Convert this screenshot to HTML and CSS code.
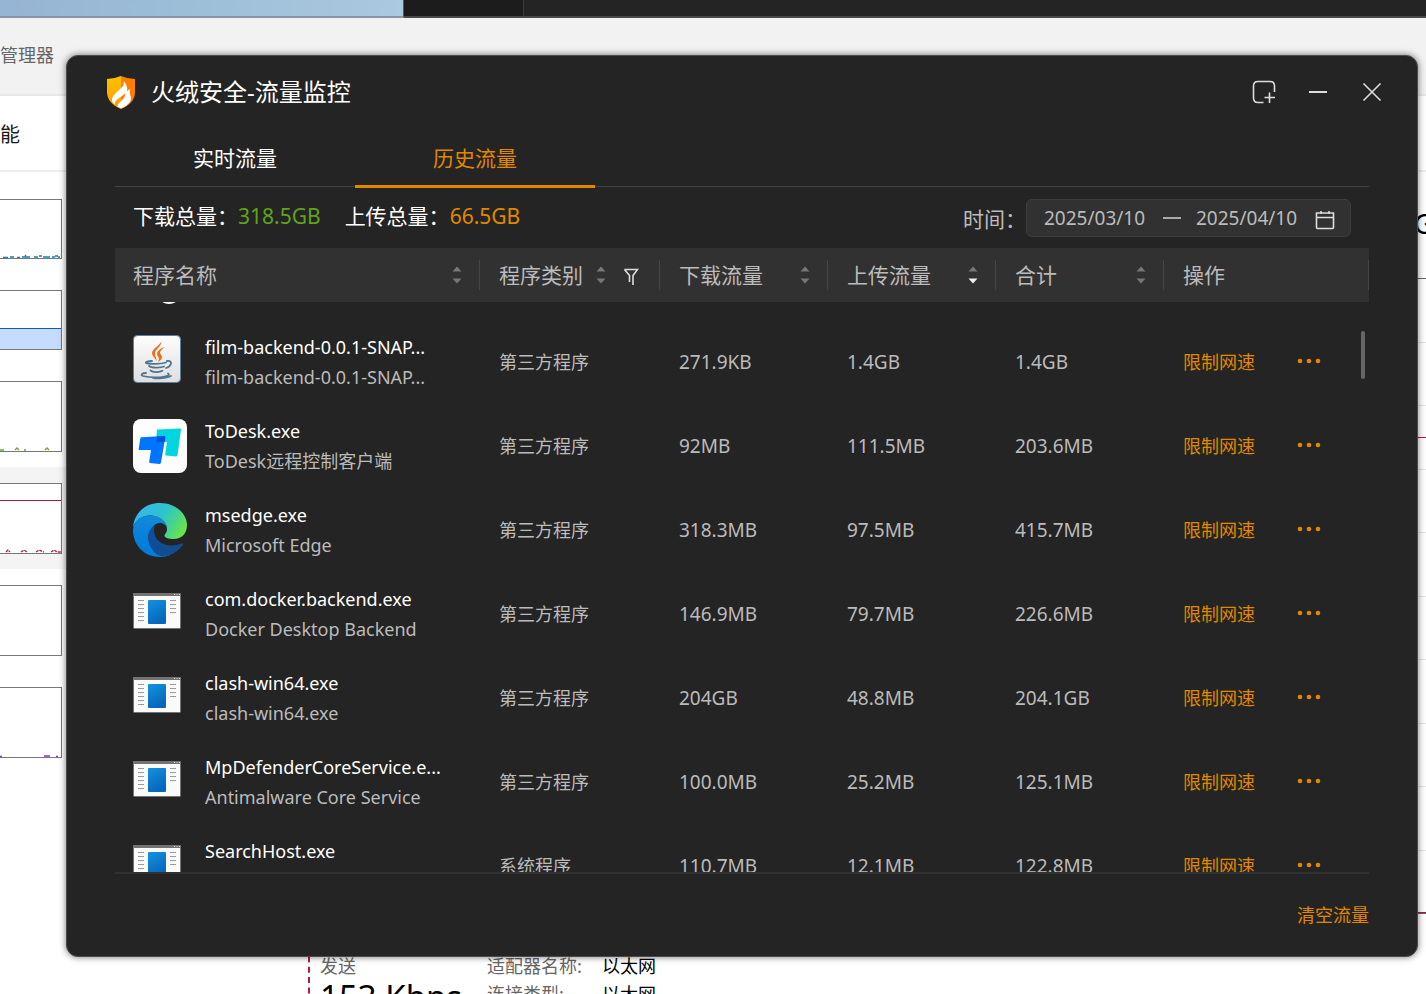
FILE: index.html
```html
<!DOCTYPE html>
<html lang="zh-CN">
<head>
<meta charset="utf-8">
<title>火绒安全-流量监控</title>
<link rel="stylesheet" href="styles.css">
</head>
<body>
<svg class="defs" aria-hidden="true">
  <defs>
    <linearGradient id="pane" x1="0" y1="0" x2="0.4" y2="1"><stop offset="0" stop-color="#1492e0"/><stop offset="1" stop-color="#0667bb"/></linearGradient>
    <linearGradient id="java-bg" x1="0" y1="0" x2="0" y2="1"><stop offset="0" stop-color="#fdfdfd"/><stop offset="1" stop-color="#dfdfe1"/></linearGradient>
    <linearGradient id="edge-top" x1="0" y1="0.2" x2="1" y2="0.6"><stop offset="0" stop-color="#36b5f4"/><stop offset="0.5" stop-color="#2dc2cf"/><stop offset="0.78" stop-color="#48d58a"/><stop offset="1" stop-color="#69e54b"/></linearGradient>
    <linearGradient id="edge-left" x1="0.5" y1="0" x2="0.3" y2="1"><stop offset="0" stop-color="#138ad8"/><stop offset="1" stop-color="#0079dc"/></linearGradient>
    <linearGradient id="edge-low" x1="0" y1="0" x2="1" y2="0.6"><stop offset="0" stop-color="#0c4f9a"/><stop offset="1" stop-color="#124c8c"/></linearGradient>
    <linearGradient id="shield-l" x1="0" y1="0" x2="0" y2="1"><stop offset="0" stop-color="#ffc400"/><stop offset="1" stop-color="#ff9a00"/></linearGradient>
    <symbol id="app" viewBox="0 0 48 36">
      <rect x="0.5" y="0.5" width="47" height="35" rx="1" fill="#fafafa" stroke="#75736f"/>
      <path d="M0 1q0-1 1-1h46q1 0 1 1v2H0z" fill="#75736f"/>
      <path d="M41 1.5h1M43.500 1.500h1M46 1.500h1" stroke="#ddd"/>
      <rect x="15" y="7" width="18" height="24" rx="1" fill="url(#pane)"/>
      <path d="M5 7.500h6M5 11.500h6M5 15.500h6M5 19.500h6M5 23.500h6M5 27.500h6M37 7.500h6M37 11.500h6M37 15.500h6M37 19.500h6" stroke="#999"/>
    </symbol>
    <symbol id="dots" viewBox="0 0 24 6">
      <circle cx="3" cy="3" r="2.300"/><circle cx="12" cy="3" r="2.300"/><circle cx="21" cy="3" r="2.300"/>
    </symbol>
    <symbol id="sort" viewBox="0 0 10 18">
      <path class="up" d="M5 0.500L9.500 5.500h-9z"/><path class="down" d="M5 17.500L9.500 12.500h-9z"/>
    </symbol>
  </defs>
</svg>

<div class="desktop">
  <div class="wallpaper"><div class="sky"></div><div class="dock"></div><div class="panel"></div></div>
  <section class="manager">
    <header class="manager-title">管理器</header>
    <div class="manager-tab">能</div>
    <div class="manager-body">
      <aside class="charts">
        <div class="chart-item"><div class="chart"><svg class="trace" viewBox="0 0 61 4"><path d="M3 3.500h5M10 3h4M17 3.500h3M22 3h8M25 2l1-1M34 3h4M39 2h3M43 3h7M52 3h3M55 2h3M58 3h2" stroke="#117dbb" stroke-width="1.400" fill="none"/></svg></div></div>
        <div class="chart-item"><div class="chart memory"><div class="fill"></div></div></div>
        <div class="chart-item"><div class="chart tall"><svg class="trace" viewBox="0 0 61 4"><path d="M0 3h4M15 3l2-2 2 2M24 3h2M45 3l2-2 2 2" stroke="#6fa23c" stroke-width="1.400" fill="none"/></svg></div></div>
        <div class="chart-item selected"><div class="chart tall network"><svg class="trace" viewBox="0 0 61 4"><path d="M6 3l2-2 2 2M21 3l3-2 3 2M36 3l3-2 5 2M51 3l3-2 3 2h4" stroke="#b5264f" stroke-width="1.400" stroke-dasharray="3 1" fill="none"/></svg></div></div>
        <div class="chart-item"><div class="chart tall"></div></div>
        <div class="chart-item"><div class="chart tall"><svg class="trace" viewBox="0 0 61 4"><path d="M0 3.500h2M44 3h6M56 3.500h2" stroke="#8f2be2" stroke-width="1.400" fill="none"/></svg></div></div>
      </aside>
      <main class="detail">
        <div class="adapter">G</div>
        <div class="graph"><i></i><i></i><i class="peak"></i><i></i><i></i><i></i><i></i><i></i><i></i><i class="last"></i></div>
        <div class="figures">
          <div class="send"><span>发送</span><strong>153 Kbps</strong></div>
          <dl class="facts"><dt>适配器名称:</dt><dd>以太网</dd><dt>连接类型:</dt><dd>以太网</dd></dl>
        </div>
      </main>
    </div>
  </section>

  <section class="window">
    <header class="titlebar">
      <svg class="logo" viewBox="0 0 28 33"><path d="M14 0Q7 3 0 3v13q0 11 14 17z" fill="url(#shield-l)"/><path d="M14 0q7 3 14 3v13q0 11-14 17z" fill="#ff7d00"/><path d="M16.500 5c1 4-1 6-5 9.500C7 18.500 5 21 5 24c0 2 1.500 3.700 3 4.500-.6-3.500 2.500-5.500 5.500-7.500 2-1.300 4-2.500 4.500-4 .5 4-2 6.500-5 9-1.500 1.500-2.500 3-2.500 4.500l3.500 2 4-2c3.500-2 6-5 6-8.500 0-2-1.500-3.500-1.200-6.500.2-1.200.2-1.800 0-2.500-1 .5-2 1.500-2.600 2.500C20.500 10.500 19 7 16.500 5z" fill="#fff"/></svg>
      <h1>火绒安全-流量监控</h1>
      <div class="controls">
        <button aria-label="小窗"><svg width="24" height="24" viewBox="0 0 24 24"><path d="M11.500 22.500H6q-4.500 0-4.500-4.500V6q0-4.500 4.500-4.500h12q4.500 0 4.500 4.500v6M12.500 17.500h10.500M17.500 12.500v10.500"/></svg></button>
        <button aria-label="最小化"><svg width="20" height="20" viewBox="0 0 20 20"><path d="M1 10h18" stroke-width="2"/></svg></button>
        <button aria-label="关闭"><svg width="20" height="20" viewBox="0 0 20 20"><path d="M1.500 1.500l17 17M18.500 1.500l-17 17"/></svg></button>
      </div>
    </header>

    <div class="content">
      <nav class="tabs"><button>实时流量</button><button class="active">历史流量</button></nav>
      <div class="summary">
        <p>下载总量：<span class="green">318.5GB</span></p>
        <p>上传总量：<span class="orange">66.5GB</span></p>
        <div class="period">
          <label for="from">时间：</label>
          <div class="range">
            <input id="from" type="text" value="2025/03/10">
            <span class="dash"></span>
            <input type="text" aria-label="结束日期" value="2025/04/10">
            <button aria-label="选择日期"><svg width="20" height="20" viewBox="0 0 20 20"><path d="M1.500 3h17v14.500q0 1-1 1h-15q-1 0-1-1zM1.500 7.500h17M6 1v3M14 1v3"/></svg></button>
          </div>
        </div>
      </div>

      <div class="list">
        <table>
          <colgroup><col><col class="c-type"><col class="c-num"><col class="c-num"><col class="c-num"><col class="c-act"></colgroup>
          <thead>
            <tr>
              <th><div class="head">程序名称<button class="sort" aria-label="排序"><svg><use href="#sort"/></svg></button></div></th>
              <th><div class="head near">程序类别<button class="sort" aria-label="排序"><svg><use href="#sort"/></svg></button><button class="filter" aria-label="筛选"><svg width="16" height="18" viewBox="0 0 16 18"><path d="M1.500 1.500h13L10 7.500V17M1.500 1.500L6.500 7.500V14"/></svg></button></div></th>
              <th><div class="head">下载流量<button class="sort" aria-label="排序"><svg><use href="#sort"/></svg></button></div></th>
              <th><div class="head">上传流量<button class="sort desc" aria-label="排序"><svg><use href="#sort"/></svg></button></div></th>
              <th><div class="head">合计<button class="sort" aria-label="排序"><svg><use href="#sort"/></svg></button></div></th>
              <th><div class="head">操作</div></th>
            </tr>
          </thead>
          <tbody>
            <tr class="cut"><td colspan="6"><svg width="54" height="3" viewBox="0 0 54 3"><path d="M29 0h14q-7 4-14 0z" fill="#fff"/></svg></td></tr>
            <tr>
              <td><div class="program"><div class="icon"><svg width="48" height="48" viewBox="0 0 48 48"><rect x="0.500" y="0.500" width="47" height="47" rx="4" fill="url(#java-bg)" stroke="#5e7f99"/><path d="M28 5c2 4-9 8-9 13 0 3 3 5 5 8-1-4-2-5-2-8 0-4 8-7 6-13zM32 12c-4 1-8 4-8 7 0 2 2 3 2 5 0 1-.5 2-1 3 2-1 4-3 4-5s-2-3-2-4c0-2 2-4 5-6z" fill="#e8711c"/><g fill="none" stroke="#4f7591" stroke-width="1.800" stroke-linecap="round"><path d="M19 26c-4 0-7 1-6 2 3 1.500 15 1 20-.5M34 26c6-1 5 5-1 7M16 31c2 2 12 2 15 .5M17.500 35.500c2 2 9 2 12 .3M13 38c-4 0-6 2-3 3 7 2 20 2 25-.5 1.500-.8 1-1.500 0-2M20 43c7 .7 14 0 18-2"/></g></svg></div><div class="names"><b>film-backend-0.0.1-SNAP...</b><span>film-backend-0.0.1-SNAP...</span></div></div></td>
              <td>第三方程序</td><td class="num">271.9KB</td><td class="num">1.4GB</td><td class="num">1.4GB</td>
              <td><div class="actions"><button>限制网速</button><button aria-label="更多"><svg><use href="#dots"/></svg></button></div></td>
            </tr>
            <tr>
              <td><div class="program"><div class="icon"><svg width="54" height="54" viewBox="0 0 54 54"><rect width="54" height="54" rx="8" fill="#fdfdfd"/><path d="M24 10.500L47 9.500q1.200 0 1 1.200L44.500 36q-.2 1.500-1.500 1.400L33 36.500q-1 0-.8-1L34 23H23z" fill="#00d5e0"/><path d="M8.500 18.300L31 17q1.500 0 1.300 1.300L28 43.500q-.3 1.500-1.500 1.400L17 44q-1-.2-.8-1.200L18 31H6.500q-1 0-.8-1L7.300 19.500q.2-1.200 1.200-1.200z" fill="#0073ff"/><path d="M24 17.400L31 17q1.500 0 1.300 1.300L31.500 23h-8.200z" fill="#0052dc"/></svg></div><div class="names"><b>ToDesk.exe</b><span>ToDesk远程控制客户端</span></div></div></td>
              <td>第三方程序</td><td class="num">92MB</td><td class="num">111.5MB</td><td class="num">203.6MB</td>
              <td><div class="actions"><button>限制网速</button><button aria-label="更多"><svg><use href="#dots"/></svg></button></div></td>
            </tr>
            <tr>
              <td><div class="program"><div class="icon"><svg width="54" height="54" viewBox="0 0 54 54"><path d="M0 25C1 10 12 0 27 0c16 0 27 11 27 22 0 9-6 14-13 14-6 0-9.500-1.500-9.500-3.500C31.500 31 34 30 34 26c0-4-3-11-13-13C12 11 2 16 0 25z" fill="url(#edge-top)"/><path d="M0 27C1 17 8 12.500 17 12.500c10 0 16 6 17 12-1.500-3-4-4.500-7-4.500-7 0-10 7-7 15 4 10 11 15 18 16.500C34 53.500 31 54 27 54 11 54 0 42 0 27z" fill="url(#edge-left)"/><path d="M22 22c-5 3-7.500 8-7 14 1 9 7 16 15 17.500 8-.5 15-5 20-11.500.5-1-.3-2-1.500-1.500-13 5-27 0-27.500-13 0-2 .3-4 1-5.500z" fill="url(#edge-low)"/></svg></div><div class="names"><b>msedge.exe</b><span>Microsoft Edge</span></div></div></td>
              <td>第三方程序</td><td class="num">318.3MB</td><td class="num">97.5MB</td><td class="num">415.7MB</td>
              <td><div class="actions"><button>限制网速</button><button aria-label="更多"><svg><use href="#dots"/></svg></button></div></td>
            </tr>
            <tr>
              <td><div class="program"><div class="icon"><svg class="app"><use href="#app"/></svg></div><div class="names"><b>com.docker.backend.exe</b><span>Docker Desktop Backend</span></div></div></td>
              <td>第三方程序</td><td class="num">146.9MB</td><td class="num">79.7MB</td><td class="num">226.6MB</td>
              <td><div class="actions"><button>限制网速</button><button aria-label="更多"><svg><use href="#dots"/></svg></button></div></td>
            </tr>
            <tr>
              <td><div class="program"><div class="icon"><svg class="app"><use href="#app"/></svg></div><div class="names"><b>clash-win64.exe</b><span>clash-win64.exe</span></div></div></td>
              <td>第三方程序</td><td class="num">204GB</td><td class="num">48.8MB</td><td class="num">204.1GB</td>
              <td><div class="actions"><button>限制网速</button><button aria-label="更多"><svg><use href="#dots"/></svg></button></div></td>
            </tr>
            <tr>
              <td><div class="program"><div class="icon"><svg class="app"><use href="#app"/></svg></div><div class="names"><b>MpDefenderCoreService.e...</b><span>Antimalware Core Service</span></div></div></td>
              <td>第三方程序</td><td class="num">100.0MB</td><td class="num">25.2MB</td><td class="num">125.1MB</td>
              <td><div class="actions"><button>限制网速</button><button aria-label="更多"><svg><use href="#dots"/></svg></button></div></td>
            </tr>
            <tr>
              <td><div class="program"><div class="icon"><svg class="app"><use href="#app"/></svg></div><div class="names"><b>SearchHost.exe</b></div></div></td>
              <td>系统程序</td><td class="num">110.7MB</td><td class="num">12.1MB</td><td class="num">122.8MB</td>
              <td><div class="actions"><button>限制网速</button><button aria-label="更多"><svg><use href="#dots"/></svg></button></div></td>
            </tr>
          </tbody>
        </table>
        <div class="thumb"></div>
      </div>
      <footer><button>清空流量</button></footer>
    </div>
  </section>
</div>
</body>
</html>
```
FILE: styles.css
```css
* { box-sizing: border-box; }
body { margin: 0; overflow: hidden; font-family: "Noto Sans", "Noto Sans CJK SC", sans-serif; font-size: 18px; }
button { padding: 0; border: 0; background: none; color: inherit; font: inherit; cursor: pointer; }
svg { display: block; flex: none; }
.defs { position: absolute; width: 0; height: 0; }

.desktop { position: relative; height: 100vh; overflow: hidden; background: #fff; display: flex; flex-direction: column; }
.wallpaper { display: flex; flex: none; height: 18px; border-bottom: 2px solid #484848; background: #242424; }
.sky { width: 404px; height: 18px; background: linear-gradient(100deg, #96b4d3, #9dbfd8 50%, #abc9df); border-bottom: 2px solid #8795a5; border-right: 1px solid #555; }
.dock { width: 120px; background: #1c1c1c; border-right: 1px solid #3a3a3a; }

.manager { flex: 1; min-height: 0; display: flex; flex-direction: column; }
.manager-title { flex: none; height: 78px; line-height: 74px; background: #f2f2f2; color: #666; border-bottom: 2px solid #e8e8e8; }
.manager-tab { flex: none; height: 76px; line-height: 78px; font-size: 20px; color: #191919; border-bottom: 2px solid #ededed; }
.manager-body { flex: 1; display: flex; min-height: 0; }
.charts { flex: none; width: 66px; padding-top: 11px; }
.chart-item { padding: 16px 4px 15px 0; }
.chart-item.selected { background: #f4f4f4; }
.chart { display: flex; flex-direction: column; justify-content: flex-end; height: 60px; border: 1px solid #777; border-left: 0; background: #fff; }
.chart.tall { height: 71px; }
.trace { height: 4px; width: 61px; }
.memory .fill { height: 21px; border-top: 1px solid #0a5bd3; background: #c6dcfc; }
.network { background: linear-gradient(#b5154f, #b5154f) 0 16px / 100% 1px no-repeat #fff; }
.detail { flex: 1; min-width: 0; margin-left: 242px; }
.adapter { height: 106px; padding-top: 30px; font-size: 28px; line-height: 42px; text-align: right; margin-right: -8px; }
.graph { display: grid; grid-auto-rows: 1fr; height: 636px; border-top: 1px solid #666; border-left: 1px solid #b5154f; }
.graph i { border-bottom: 1px solid #e4e4e4; }
.graph .peak { background: linear-gradient(#b5154f, #b5154f) 0 31px / 100% 1px no-repeat; }
.graph .last { border-bottom: 1px solid #666; background: linear-gradient(#b5154f, #b5154f) 0 61px / 100% 1px no-repeat; }
.figures { display: flex; height: 120px; margin-top: 32px; border-left: 2px dashed #b5154f; padding: 6px 0 0 10px; color: #666; }
.send { width: 167px; }
.send span { display: block; line-height: 28px; }
.send strong { display: block; font-weight: 400; font-size: 33px; line-height: 34px; color: #000; white-space: nowrap; }
.facts { margin: 0; display: grid; grid-template-columns: 115px auto; align-content: start; line-height: 28px; }
.facts dd { margin: 0; color: #000; }

.window { position: absolute; inset: 55px 8px 37px 66px; display: flex; flex-direction: column; border: 1px solid #4c4c4c; border-radius: 12px; background: #242424; color: #fff; box-shadow: 0 0 7px rgba(0,0,0,.55); }
.titlebar { display: flex; align-items: center; flex: none; height: 72px; padding: 0 18px 0 40px; }
.logo { width: 28px; height: 33px; }
h1 { margin: 0 0 0 16px; flex: 1; font-size: 24px; line-height: 36px; font-weight: 400; }
.controls { display: flex; }
.controls button { width: 54px; height: 54px; display: grid; place-items: center; }
.controls svg, .range svg, .filter svg { fill: none; stroke: #ddd; stroke-width: 1.6; }
.content { flex: 1; min-height: 0; padding: 0 48px; display: flex; flex-direction: column; }
.tabs { display: flex; flex: none; height: 60px; background: linear-gradient(#444, #444) 0 58px / 100% 1px no-repeat; font-size: 21px; }
.tabs button { width: 240px; border-bottom: 3px solid transparent; }
.tabs .active { color: #e08800; border-color: #e08800; }
.summary { display: flex; flex: none; height: 60px; padding: 0 18px; font-size: 21px; }
.summary p { margin: 0 24px 0 0; line-height: 56px; }
.green { color: #5fa31b; }
.orange { color: #e08800; }
.period { margin-left: auto; display: flex; align-items: center; color: #bbb; }
.range { display: flex; align-items: center; gap: 15px; height: 38px; padding: 0 15px 0 17px; border: 1px solid #3d3d3d; border-radius: 6px; background: #313131; }
.range input { width: 104px; padding: 0; border: 0; background: none; color: #bbb; font: inherit; font-size: 19px; line-height: 28px; }
.range .dash { width: 18px; height: 2px; background: #aaa; }
.range button { margin-top: 4px; }

.list { position: relative; flex: 1; min-height: 0; overflow: hidden; border-bottom: 2px solid #313131; }
table { width: 100%; table-layout: fixed; border-collapse: collapse; color: #bbb; }
.c-type { width: 180px; }
.c-num { width: 168px; }
.c-act { width: 205px; }
th { padding: 0; height: 54px; background: #313131; font-size: 21px; font-weight: 400; text-align: left; }
.head { display: flex; align-items: center; height: 30px; padding: 0 17px 0 19px; line-height: 30px; border-right: 1px solid #454545; }
th:first-child .head { padding-left: 18px; }
.sort { margin-left: auto; }
.near .sort { margin-left: 13px; }
.sort svg { width: 10px; height: 18px; fill: #777; }
.down { fill: var(--down, #777); }
.sort.desc { --down: #eee; }
.filter { margin: 3px 0 0 17px; }
td { padding: 0 0 2px 19px; height: 84px; font-size: 18px; }
td:first-child { padding: 0 0 0 18px; }
td.num { padding-bottom: 1px; font-size: 19px; }
.cut td { height: 18px; vertical-align: top; }
.program { display: flex; gap: 18px; height: 84px; padding: 12px 0; }
.icon { flex: none; width: 54px; padding-top: 3px; }
.app { width: 48px; height: 36px; margin-top: 6px; }
.names { min-width: 0; white-space: nowrap; }
.names b, .names span { display: block; line-height: 30px; font-weight: 400; }
.names b { color: #fff; }
.actions { display: flex; align-items: center; gap: 42px; color: #e08800; }
.actions svg { width: 24px; height: 6px; fill: #e08800; }
.thumb { position: absolute; top: 83px; right: 4px; width: 4px; height: 48px; border-radius: 2px; background: #666; }
footer { flex: none; height: 82px; padding-bottom: 3px; display: flex; justify-content: flex-end; align-items: center; color: #e08800; }
```
